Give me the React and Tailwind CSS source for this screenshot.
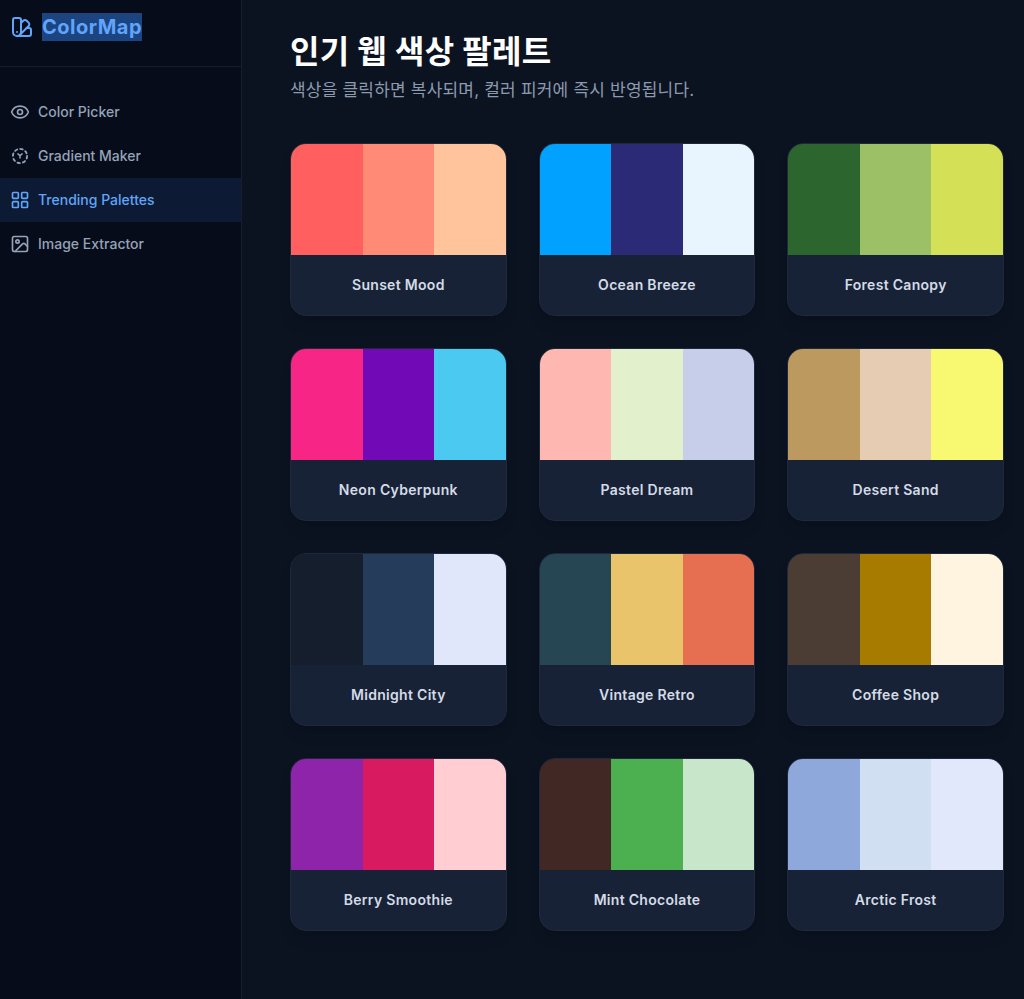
import React from 'react';
import { SwatchBook, Eye, LayoutGrid, Image } from 'lucide-react';

// dashed ring with a small Y in the middle, no matching icon in the package
function GradientIcon({ className }) {
  return (
    <svg className={className} viewBox="0 0 24 24" fill="none" stroke="currentColor" strokeWidth="2.2" strokeLinecap="round" strokeLinejoin="round">
      <circle cx="12" cy="12" r="8.5" strokeDasharray="3 3.68" />
      <path d="M9.5 9.5l2.5 2 2.5-2M12 11.5v3" strokeWidth="1.8" />
    </svg>
  );
}

const NAV = [
  { label: 'Color Picker', icon: Eye },
  { label: 'Gradient Maker', icon: GradientIcon },
  { label: 'Trending Palettes', icon: LayoutGrid, active: true },
  { label: 'Image Extractor', icon: Image },
];

const PALETTES = [
  { name: 'Sunset Mood', colors: ['#FF5F5F', '#FF8A75', '#FFC49B'] },
  { name: 'Ocean Breeze', colors: ['#00A1FF', '#2B2A77', '#E8F5FF'] },
  { name: 'Forest Canopy', colors: ['#2D652F', '#9CC065', '#D4E157'] },
  { name: 'Neon Cyberpunk', colors: ['#F72585', '#7209B7', '#4CC9F0'] },
  { name: 'Pastel Dream', colors: ['#FFB7B2', '#E2F0CB', '#C7CEEA'] },
  { name: 'Desert Sand', colors: ['#BC9A5F', '#E6CCB2', '#F9F871'] },
  { name: 'Midnight City', colors: ['#141E2C', '#253D5B', '#E0E7FA'] },
  { name: 'Vintage Retro', colors: ['#264653', '#E9C46A', '#E76F51'] },
  { name: 'Coffee Shop', colors: ['#4B3D33', '#A67B00', '#FFF4E0'] },
  { name: 'Berry Smoothie', colors: ['#8E24AA', '#D81B60', '#FFCDD2'] },
  { name: 'Mint Chocolate', colors: ['#422824', '#4CAF50', '#C8E6C9'] },
  { name: 'Arctic Frost', colors: ['#8EA8DB', '#D0DFF2', '#E2E8FB'] },
];

function PaletteCard({ palette }) {
  return (
    <button className="flex flex-col overflow-hidden rounded-2xl border border-[#1e293b] bg-[#182236] shadow-lg">
      <div className="flex h-[111px] w-full">
        {palette.colors.map(color => (
          <div key={color} className="flex-1" style={{ backgroundColor: color }} />
        ))}
      </div>
      <div className="flex h-[60px] items-center justify-center text-sm font-semibold tracking-[0.3px] text-[#d3dbe6]">
        {palette.name}
      </div>
    </button>
  );
}

export default function App() {
  return (
    <div className="flex h-[999px] overflow-hidden bg-[#0b1321] font-['Inter','Noto_Sans_CJK_KR',sans-serif]">
      {/* Sidebar */}
      <aside className="w-[242px] shrink-0 border-r border-[#161d2d] bg-[#070c1a]">
        <div className="flex h-[67px] items-start gap-2 border-b border-[#161d2d] pl-[10px] pt-[13px]">
          <SwatchBook className="mt-[2px] h-6 w-6 text-[#60a5fa]" />
          <span className="bg-[#1c4480] text-xl font-bold leading-7 tracking-wide text-[#60a5fa]">ColorMap</span>
        </div>
        <nav className="mt-[23px] flex flex-col">
          {NAV.map(({ label, icon: Icon, active }) => (
            <a
              key={label}
              className={`flex h-11 items-center gap-2 pl-[10px] text-sm font-medium ${
                active ? 'bg-[#0c1a33] text-[#60a5fa]' : 'text-[#94a3b8]'
              }`}
            >
              <Icon className="h-5 w-5" />
              {label}
            </a>
          ))}
        </nav>
      </aside>

      {/* Main */}
      <main className="flex-1 pl-12 pr-5 pt-[34px]">
        <h1 className="text-[32px] font-bold leading-9 tracking-[0.3px] text-white">인기 웹 색상 팔레트</h1>
        <p className="mt-2 text-[17px] leading-6 tracking-[0.2px] text-[#8d9aae]">색상을 클릭하면 복사되며, 컬러 피커에 즉시 반영됩니다.</p>
        <div className="mt-[41px] grid grid-cols-3 gap-8">
          {PALETTES.map(palette => (
            <PaletteCard key={palette.name} palette={palette} />
          ))}
        </div>
      </main>
    </div>
  );
}
